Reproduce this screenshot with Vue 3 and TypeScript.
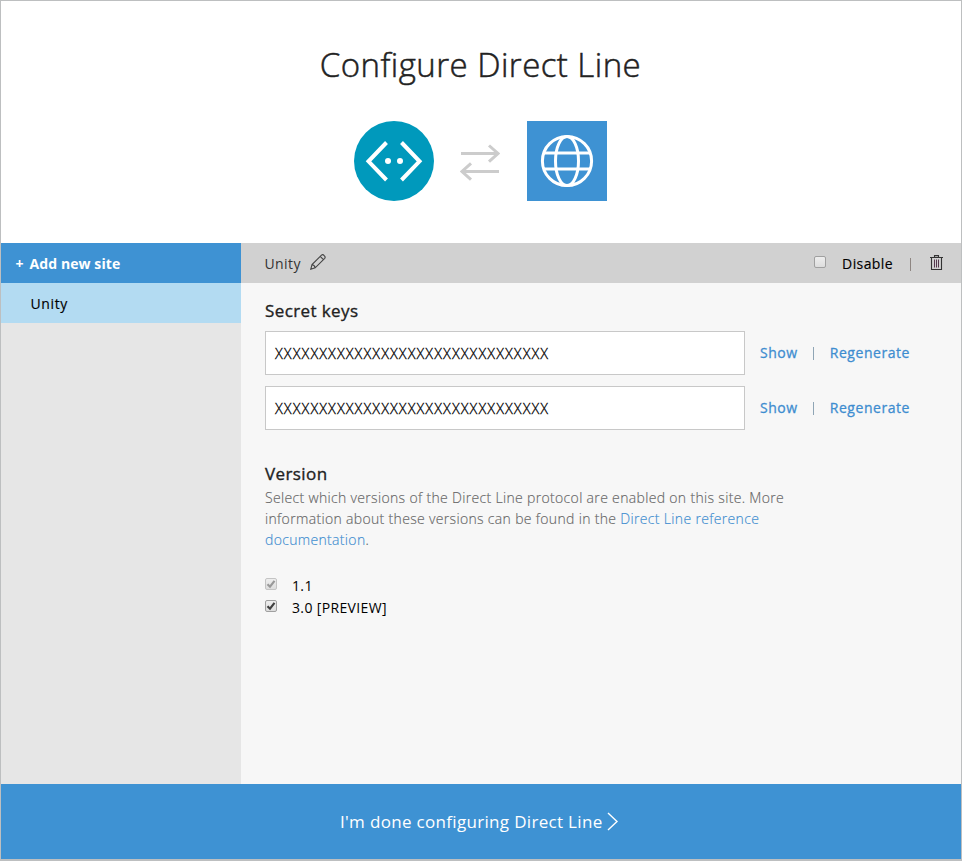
<script setup lang="ts">
import { ref } from 'vue'

interface SecretKey {
  id: number
  value: string
}

const siteName = ref('Unity')
const disabled = ref(false)
const keys = ref<SecretKey[]>([
  { id: 1, value: 'X'.repeat(31) },
  { id: 2, value: 'X'.repeat(31) },
])
const versions = ref([
  { label: '1.1', locked: true },
  { label: '3.0 [PREVIEW]', locked: false },
])
</script>

<template>
  <div class="page">
    <header class="hero">
      <h1>Configure Direct Line</h1>
      <div class="logos">
        <svg class="bot" width="80" height="80" viewBox="0 0 80 80">
          <circle cx="40" cy="40" r="40" fill="#0099bc" />
          <path d="M32.5 21.5 14.5 40.3 32.5 59M47.5 21.5 65.5 40.3 47.5 59" fill="none" stroke="#fff" stroke-width="4" />
          <circle cx="34" cy="40" r="3" fill="#fff" />
          <circle cx="46" cy="40" r="3" fill="#fff" />
        </svg>
        <svg class="arrows" width="40" height="38" viewBox="0 0 40 38">
          <path d="M1 9.5H38M29 1.5 38 9.5 29 17.7M39 27.5H2M11 19.3 2 27.5 11 35.7" fill="none" stroke="#ccc" stroke-width="3" />
        </svg>
        <svg class="globe" width="80" height="80" viewBox="0 0 80 80">
          <rect width="80" height="80" fill="#3e92d3" />
          <g fill="none" stroke="#fff" stroke-width="3">
            <circle cx="40" cy="40" r="24.6" />
            <ellipse cx="40" cy="40" rx="11.5" ry="24.6" />
            <path d="M17 32H63M17 48H63" />
          </g>
        </svg>
      </div>
    </header>

    <main class="body">
      <nav class="side">
        <button class="add"><span class="plus">+</span><span>Add new site</span></button>
        <div class="site">{{ siteName }}</div>
      </nav>
      <section class="content">
        <div class="bar">
          <span class="name">{{ siteName }}</span>
          <svg class="pencil" width="16" height="16" viewBox="0 0 16 16">
            <path d="M.8 15.2 2 10.6 11.5 1.1Q12.8 0 14.2 1.6 15.8 3.1 14.7 4.3L5.2 13.8ZM2 10.6Q4.6 11 5.2 13.8M10.2 2.4 13.4 5.6" fill="none" stroke="#444" stroke-width="1.1" />
          </svg>
          <label class="disable">
            <span class="check" :class="{ on: disabled }"></span>
            <span>Disable</span>
          </label>
          <span class="pipe dark"></span>
          <svg class="trash" width="13" height="16" viewBox="0 0 13 16">
            <path d="M0 2.5H13M4.5 2.5V.6H8.5V2.5M1.5 2.5V14.5H11.5V2.5" fill="none" stroke="#333" stroke-width="1.1" />
            <path d="M4.5 4.5V12.5M6.5 4.5V12.5M8.5 4.5V12.5" stroke="#56394f" stroke-width="1" />
          </svg>
        </div>
        <div class="panel">
          <h2 class="keys-title">Secret keys</h2>
          <div v-for="key in keys" :key="key.id" class="key-row">
            <div class="field">{{ key.value }}</div>
            <a class="show">Show</a>
            <span class="pipe"></span>
            <a>Regenerate</a>
          </div>
          <h2 class="version-title">Version</h2>
          <p class="description">
            Select which versions of the Direct Line protocol are enabled on this site. More<br />
            information about these versions can be found in the <a>Direct Line reference</a><br />
            <a>documentation</a>.
          </p>
          <div class="versions">
            <label v-for="version in versions" :key="version.label" class="version">
              <span class="check" :class="{ locked: version.locked }">
                <svg width="10" height="10" viewBox="0 0 10 10">
                  <path d="M1.5 5.2 4 7.7 8.5 1.8" fill="none" stroke="currentColor" stroke-width="2.2" />
                </svg>
              </span>
              <span>{{ version.label }}</span>
            </label>
          </div>
        </div>
      </section>
    </main>

    <footer class="done">
      <span>I'm done configuring Direct Line</span>
      <svg class="chevron" width="12" height="20" viewBox="0 0 12 20">
        <path d="M1 1 10 9.5 1 18" fill="none" stroke="#fff" stroke-width="1.4" />
      </svg>
    </footer>
  </div>
</template>

<style>
body {
  margin: 0;
}
</style>

<style scoped>
* {
  box-sizing: border-box;
}
.page {
  width: 962px;
  height: 861px;
  display: flex;
  flex-direction: column;
  border: 1px solid #bdbfc0;
  border-bottom-width: 2px;
  background: #fff;
  font-family: 'Open Sans', 'Noto Sans', sans-serif;
  font-size: 14px;
  color: #000;
  overflow: hidden;
  white-space: nowrap;
}
.hero {
  height: 242px;
  flex: none;
}
h1 {
  margin: 0;
  padding: 40px 1px 0 0;
  height: 120px;
  line-height: 48px;
  text-align: center;
  font-size: 33px;
  font-weight: 300;
  letter-spacing: 0.45px;
  color: #222;
  -webkit-text-stroke: 0.5px #222;
}
.logos {
  display: flex;
  justify-content: center;
  align-items: center;
  padding-right: 2px;
}
.arrows {
  margin: 4px 27px 0 26px;
}
.body {
  display: flex;
  height: 541px;
  flex: none;
}
.side {
  width: 240px;
  background: #e6e6e6;
}
.add {
  display: flex;
  align-items: center;
  gap: 6px;
  width: 240px;
  height: 40px;
  padding: 0 0 0 14.5px;
  border: 0;
  background: #3e92d3;
  color: #fff;
  font: 700 14px 'Open Sans', sans-serif;
  letter-spacing: 0.08px;
}
.site {
  display: flex;
  align-items: center;
  height: 40px;
  padding-left: 29.5px;
  background: #b3dbf2;
  letter-spacing: 0.6px;
  -webkit-text-stroke: 0.15px #000;
}
.content {
  flex: 1;
  background: #f7f7f7;
}
.bar {
  display: flex;
  align-items: center;
  height: 40px;
  padding: 0 18px 0 23.5px;
  background: #d1d1d1;
}
.name {
  color: #333;
  letter-spacing: 0.4px;
}
.pencil {
  margin: -3px 0 0 9px;
}
.disable {
  display: flex;
  align-items: center;
  gap: 16px;
  margin-left: auto;
  letter-spacing: 0.4px;
  -webkit-text-stroke: 0.15px #000;
}
.disable .check {
  margin-top: -3px;
}
.pipe {
  width: 1px;
  height: 13px;
  margin: 1px 16px 0 15px;
  background: #8fa5b5;
}
.pipe.dark {
  margin: 2px 19px 0 17px;
  background: #8e8682;
}
.check {
  display: flex;
  align-items: center;
  justify-content: center;
  width: 12px;
  height: 12px;
  border: 1px solid #a0a0a0;
  border-radius: 2px;
  background: linear-gradient(#eee, #ddd);
  color: #404040;
}
.check.locked {
  border-color: #c4c4c4;
  color: #999;
}
.panel {
  padding: 16px 0 0 24px;
}
h2 {
  margin: 0;
  font-size: 17px;
  line-height: 24px;
  font-weight: 400;
  letter-spacing: 0.4px;
  color: #222;
  -webkit-text-stroke: 0.35px #222;
}
.keys-title {
  height: 32px;
}
.key-row {
  display: flex;
  align-items: center;
  height: 44px;
  margin-bottom: 11px;
}
.field {
  display: flex;
  align-items: center;
  width: 480px;
  height: 44px;
  padding-left: 9px;
  border: 1px solid #c8c8c8;
  background: #fff;
  font-size: 14.5px;
  font-weight: 300;
  letter-spacing: 1.05px;
  -webkit-text-stroke: 0.3px #000;
}
a {
  color: #3e8dd0;
}
.key-row a {
  padding-bottom: 2px;
  letter-spacing: 0.55px;
  -webkit-text-stroke: 0.3px #3e8dd0;
}
.show {
  margin-left: 15px;
}
.version-title {
  margin-top: 32px;
  height: 25px;
}
.description {
  margin: 0;
  line-height: 21px;
  font-weight: 300;
  letter-spacing: 0.33px;
  color: #666;
  -webkit-text-stroke: 0.15px;
}
.versions {
  margin-top: 25px;
}
.version {
  display: flex;
  align-items: center;
  gap: 15px;
  height: 22px;
  letter-spacing: 0.35px;
}
.version span:last-child {
  margin-top: -2px;
}
.version .check {
  margin-top: -4px;
}
.done {
  display: flex;
  align-items: center;
  height: 75px;
  flex: none;
  padding-left: 339px;
  background: #3e92d3;
  color: #fff;
  font-size: 17px;
  letter-spacing: 0.32px;
}
.chevron {
  margin-left: 4px;
}
</style>
